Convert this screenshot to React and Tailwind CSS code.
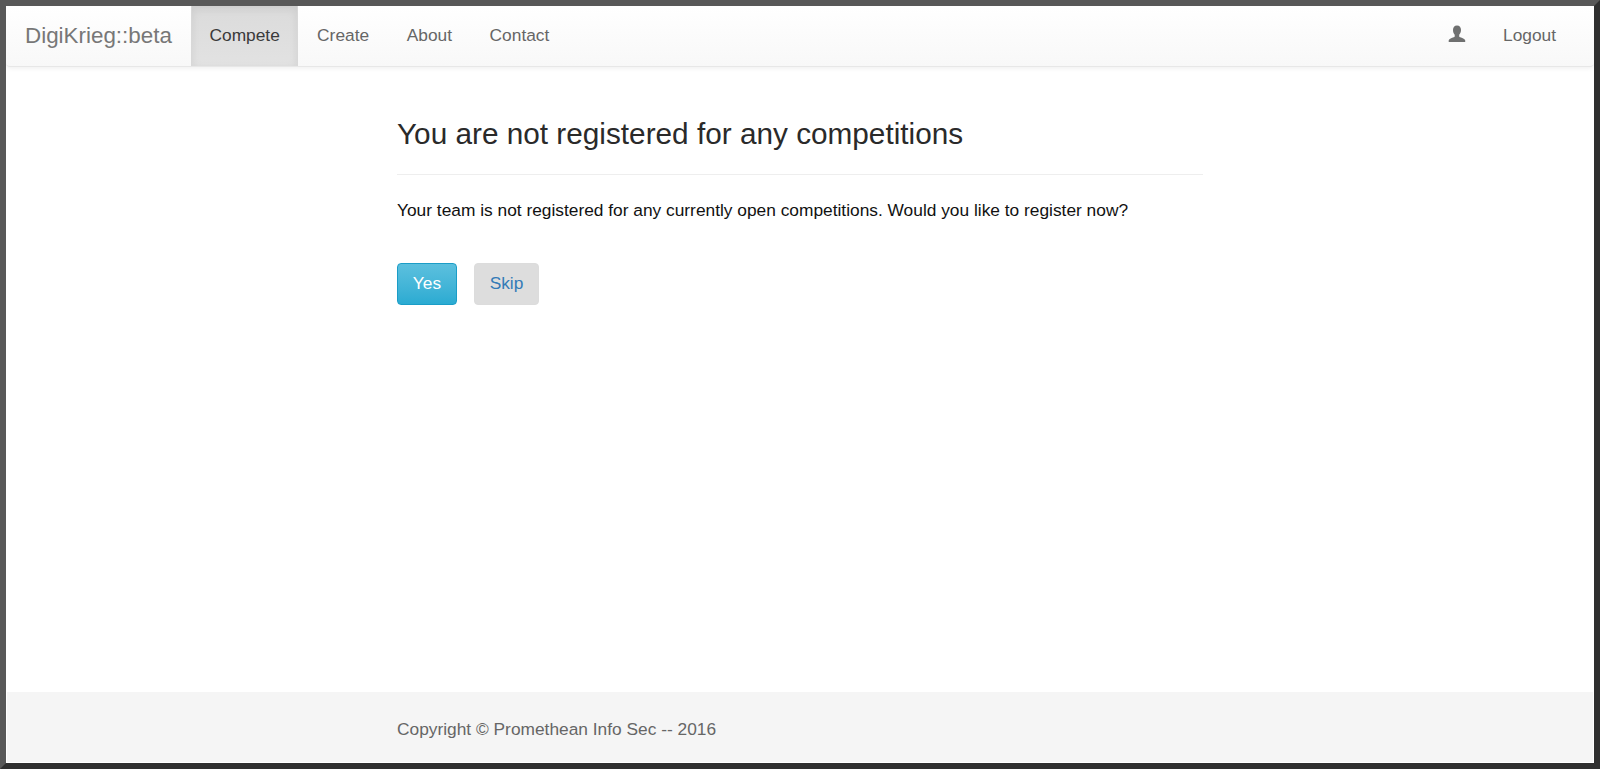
import React from "react";

function NavLink({ children, active }) {
  return (
    <a className={active
      ? "flex items-center px-[17.5px] h-full bg-gradient-to-b from-[#dbdbdb] to-[#e2e2e2] text-[#3a3a3a] border-x border-[#d8d8d8] shadow-[inset_0_3px_9px_rgba(0,0,0,0.075)]"
      : "flex items-center px-[18.8px] h-full text-[#666666]"}>
      {children}
    </a>
  );
}

function UserIcon() {
  return (
    <svg width="18" height="18" viewBox="0 0 18 18" fill="#6f7070">
      <path d="M9 0.5c2.6 0 4 2 4 4.6 0 1.9-.8 3.6-1.8 4.6v1.5c0 .5.3.8 1 1.1 2 .8 4.4 1.6 5 3v1.6H.7v-1.6c.6-1.400 3-2.200 5-3 .7-.3 1-.6 1-1.100V9.700C5.700 8.700 5 7 5 5.100 5 2.500 6.400.5 9 .5z" />
    </svg>
  );
}

export default function App() {
  return (
    <div className="h-[769px] flex flex-col border-[6px] border-l-[#585858] border-t-[#585858] border-r-[#2f2f2f] border-b-[#2f2f2f] bg-white font-['Liberation_Sans',Arial,sans-serif] overflow-hidden">
      <nav className="h-[61px] shrink-0 flex items-stretch justify-between text-[17.33px] bg-gradient-to-b from-white to-[#f8f8f8] rounded-b-[4px] border-b border-[#e7e7e7] shadow-[0_1px_5px_rgba(0,0,0,0.075)]">
        <div className="flex items-stretch">
          <a className="flex items-center pl-[19px] w-[185px] text-[22.4px] text-[#777777] shrink-0">DigiKrieg::beta</a>
          <NavLink active>Compete</NavLink>
          <NavLink>Create</NavLink>
          <NavLink>About</NavLink>
          <NavLink>Contact</NavLink>
        </div>
        <div className="flex items-stretch pr-[32px]">
          <a className="flex items-center pb-[5px] pr-[28px]"><UserIcon /></a>
          <a className="flex items-center text-[#666666] pl-[9px] pr-[6px]">Logout</a>
        </div>
      </nav>

      <main className="flex-1 w-[806px] ml-[391px]">
        <h1 className="mt-[50px] text-[29.75px] leading-[33px] text-[#2a2a2a] font-normal">You are not registered for any competitions</h1>
        <hr className="mt-[24px] border-[#eeeeee]" />
        <p className="mt-[24px] text-[17.33px] leading-[23px] text-[#111111]">Your team is not registered for any currently open competitions. Would you like to register now?</p>
        <div className="mt-[41px] flex gap-[17px] text-[17.33px]">
          <a className="flex items-center justify-center w-[60px] h-[42px] rounded-[4px] border border-[#1b9dc7] text-white bg-gradient-to-b from-[#5bc0de] to-[#2aabd2]">Yes</a>
          <a className="flex items-center justify-center w-[65px] h-[42px] rounded-[4px] border border-[#dcdcdc] text-[#337ab7] bg-[#dddddd]">Skip</a>
        </div>
      </main>

      <footer className="h-[70px] shrink-0 mx-px mb-px flex items-center pl-[390px] pt-[5px] bg-[#f5f5f5] text-[17.33px] text-[#666666]">
        Copyright © Promethean Info Sec -- 2016
      </footer>
    </div>
  );
}
